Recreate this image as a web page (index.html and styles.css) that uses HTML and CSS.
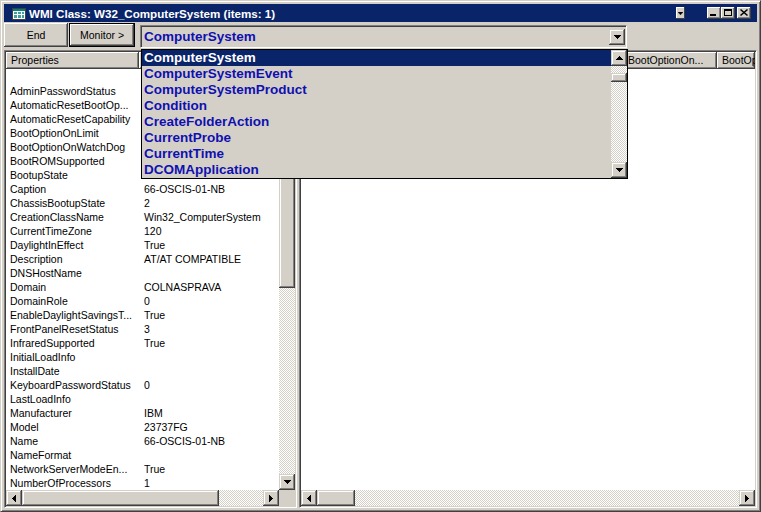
FILE: index.html
```html
<!DOCTYPE html>
<html lang="en">
<head>
  <meta charset="UTF-8">
  <title>WMI Class: W32_ComputerSystem</title>
  <link rel="stylesheet" href="styles.css">
</head>
<body>
  <svg width="0" height="0" class="defs">
    <symbol id="ar-down" viewBox="0 0 7 4"><path d="M0 0h7v1h-1v1h-1v1h-1v1h-1v-1h-1v-1h-1v-1h-1z"/></symbol>
    <symbol id="ar-up" viewBox="0 0 7 4"><path d="M0 4h7v-1h-1v-1h-1v-1h-1v-1h-1v1h-1v1h-1v1h-1z"/></symbol>
    <symbol id="ar-left" viewBox="0 0 4 7"><path d="M4 0v7h-1v-1h-1v-1h-1v-1h-1v-1h1v-1h1v-1h1v-1z"/></symbol>
    <symbol id="ar-right" viewBox="0 0 4 7"><path d="M0 0v7h1v-1h1v-1h1v-1h1v-1h-1v-1h-1v-1h-1v-1z"/></symbol>
  </svg>

  <div class="window">
    <div class="titlebar">
      <svg class="app-icon" width="14" height="12" viewBox="0 0 14 12">
        <rect x="0" y="0" width="14" height="12" fill="#404040"/>
        <rect x="1" y="1" width="12" height="10" fill="#ffffff"/>
        <rect x="1" y="1" width="12" height="2" fill="#008080"/>
        <rect x="2" y="4" width="3" height="2" fill="#40a0a0"/>
        <rect x="6" y="4" width="3" height="2" fill="#40a0a0"/>
        <rect x="10" y="4" width="2" height="2" fill="#40a0a0"/>
        <rect x="2" y="7" width="3" height="3" fill="#40a0a0"/>
        <rect x="6" y="7" width="3" height="3" fill="#40a0a0"/>
        <rect x="10" y="7" width="2" height="3" fill="#40a0a0"/>
      </svg>
      <span class="title">WMI Class: W32_ComputerSystem (items: 1)</span>
      <span class="cap-menu"><svg width="5" height="3"><use href="#ar-down"/></svg></span>
      <span class="cap-btn cap-min">
        <svg width="14" height="12"><rect x="3" y="7" width="6" height="2"/></svg>
      </span>
      <span class="cap-btn">
        <svg width="14" height="12"><path d="M3 2h8v7h-8z M4 4v4h6v-4z" fill-rule="evenodd"/></svg>
      </span>
      <span class="cap-btn cap-close">
        <svg width="14" height="12"><path d="M3.5 2.5l7 6M10.5 2.5l-7 6" stroke="#000" stroke-width="1.6"/></svg>
      </span>
    </div>

    <div class="toolbar">
      <button class="btn btn-end">End</button>
      <button class="btn btn-default">Monitor &gt;</button>
      <div class="combo">
        <span class="combo-text">ComputerSystem</span>
        <span class="sb-btn combo-btn"><svg width="7" height="4"><use href="#ar-down"/></svg></span>

        <div class="droplist">
          <div class="options">
            <div class="opt sel">ComputerSystem</div>
            <div class="opt">ComputerSystemEvent</div>
            <div class="opt">ComputerSystemProduct</div>
            <div class="opt">Condition</div>
            <div class="opt">CreateFolderAction</div>
            <div class="opt">CurrentProbe</div>
            <div class="opt">CurrentTime</div>
            <div class="opt">DCOMApplication</div>
          </div>
          <div class="vscroll drop-scroll">
            <span class="sb-btn"><svg width="7" height="4"><use href="#ar-up"/></svg></span>
            <span class="track track-top"></span>
            <span class="thumb thumb-small"></span>
            <span class="track"></span>
            <span class="sb-btn"><svg width="7" height="4"><use href="#ar-down"/></svg></span>
          </div>
        </div>
      </div>
    </div>

    <div class="panes">
      <div class="pane pane-left">
        <div class="pane-main">
          <div class="lv">
            <div class="lv-head">
              <span class="hcell hcell-name">Properties</span>
              <span class="hcell hcell-val"></span>
            </div>
            <div class="rows">
              <div class="row"><span class="name">AdminPasswordStatus</span><span class="val"></span></div>
              <div class="row"><span class="name">AutomaticResetBootOp...</span><span class="val"></span></div>
              <div class="row"><span class="name">AutomaticResetCapability</span><span class="val"></span></div>
              <div class="row"><span class="name">BootOptionOnLimit</span><span class="val"></span></div>
              <div class="row"><span class="name">BootOptionOnWatchDog</span><span class="val"></span></div>
              <div class="row"><span class="name">BootROMSupported</span><span class="val"></span></div>
              <div class="row"><span class="name">BootupState</span><span class="val"></span></div>
              <div class="row"><span class="name">Caption</span><span class="val">66-OSCIS-01-NB</span></div>
              <div class="row"><span class="name">ChassisBootupState</span><span class="val">2</span></div>
              <div class="row"><span class="name">CreationClassName</span><span class="val">Win32_ComputerSystem</span></div>
              <div class="row"><span class="name">CurrentTimeZone</span><span class="val">120</span></div>
              <div class="row"><span class="name">DaylightInEffect</span><span class="val">True</span></div>
              <div class="row"><span class="name">Description</span><span class="val">AT/AT COMPATIBLE</span></div>
              <div class="row"><span class="name">DNSHostName</span><span class="val"></span></div>
              <div class="row"><span class="name">Domain</span><span class="val">COLNASPRAVA</span></div>
              <div class="row"><span class="name">DomainRole</span><span class="val">0</span></div>
              <div class="row"><span class="name">EnableDaylightSavingsT...</span><span class="val">True</span></div>
              <div class="row"><span class="name">FrontPanelResetStatus</span><span class="val">3</span></div>
              <div class="row"><span class="name">InfraredSupported</span><span class="val">True</span></div>
              <div class="row"><span class="name">InitialLoadInfo</span><span class="val"></span></div>
              <div class="row"><span class="name">InstallDate</span><span class="val"></span></div>
              <div class="row"><span class="name">KeyboardPasswordStatus</span><span class="val">0</span></div>
              <div class="row"><span class="name">LastLoadInfo</span><span class="val"></span></div>
              <div class="row"><span class="name">Manufacturer</span><span class="val">IBM</span></div>
              <div class="row"><span class="name">Model</span><span class="val">23737FG</span></div>
              <div class="row"><span class="name">Name</span><span class="val">66-OSCIS-01-NB</span></div>
              <div class="row"><span class="name">NameFormat</span><span class="val"></span></div>
              <div class="row"><span class="name">NetworkServerModeEn...</span><span class="val">True</span></div>
              <div class="row"><span class="name">NumberOfProcessors</span><span class="val">1</span></div>
            </div>
          </div>
          <div class="vscroll">
            <span class="sb-btn"><svg width="7" height="4"><use href="#ar-up"/></svg></span>
            <span class="thumb thumb-left"></span>
            <span class="track"></span>
            <span class="sb-btn"><svg width="7" height="4"><use href="#ar-down"/></svg></span>
          </div>
        </div>
        <div class="hbar">
          <div class="hscroll">
            <span class="sb-btn"><svg width="4" height="7"><use href="#ar-left"/></svg></span>
            <span class="thumb thumb-h-left"></span>
            <span class="track"></span>
            <span class="sb-btn"><svg width="4" height="7"><use href="#ar-right"/></svg></span>
          </div>
          <span class="corner"></span>
        </div>
      </div>

      <div class="splitter"></div>

      <div class="pane pane-right">
        <div class="pane-main">
          <div class="lv">
            <div class="lv-head">
              <span class="hcell hcell-a"></span>
              <span class="hcell hcell-b">BootOptionOn...</span>
              <span class="hcell hcell-c">BootOp</span>
            </div>
          </div>
        </div>
        <div class="hbar">
          <div class="hscroll">
            <span class="sb-btn"><svg width="4" height="7"><use href="#ar-left"/></svg></span>
            <span class="thumb thumb-h-right"></span>
            <span class="track"></span>
            <span class="sb-btn"><svg width="4" height="7"><use href="#ar-right"/></svg></span>
          </div>
        </div>
      </div>
    </div>
  </div>
</body>
</html>
```

FILE: styles.css
```css
* {
  box-sizing: border-box;
}
body {
  margin: 0;
  font-family: "Liberation Sans", Arial, sans-serif;
  font-size: 10.5px;
  color: #000;
  background: #d4d0c8;
}
.defs {
  position: absolute;
}
svg {
  display: block;
}

/* window frame */
.window {
  width: 761px;
  height: 512px;
  display: flex;
  flex-direction: column;
  padding: 3px;
  background: #d4d0c8;
  border: 1px solid;
  border-color: #d4d0c8 #404040 #404040 #d4d0c8;
  box-shadow: inset 1px 1px #fff, inset -1px -1px #808080;
}

/* title bar */
.titlebar {
  height: 18px;
  flex: none;
  display: flex;
  align-items: center;
  padding: 0 6px 0 4px;
  background: #0a246a;
  color: #fff;
}
.app-icon {
  margin: 1px 3px 0 4px;
}
.title {
  flex: 1;
  font-weight: bold;
  font-size: 11.6px;
  white-space: nowrap;
}
.cap-menu {
  width: 9px;
  height: 12px;
  margin-right: 22px;
  display: flex;
  align-items: center;
  justify-content: center;
  background: #d4d0c8;
  box-shadow: inset -1px -1px #404040, inset 1px 1px #fff;
}
.cap-btn {
  width: 14px;
  height: 12px;
  background: #d4d0c8;
  box-shadow: inset -1px -1px #404040, inset 1px 1px #fff, inset -2px -2px #808080;
}
.cap-close {
  margin-left: 2px;
}

/* toolbar */
.toolbar {
  height: 25px;
  margin-top: 1px;
  flex: none;
  display: flex;
  align-items: flex-start;
}
.btn {
  height: 24px;
  margin: 0;
  padding: 0;
  border: none;
  font-family: inherit;
  font-size: 10.5px;
  background: #d4d0c8;
  box-shadow: inset -1px -1px #404040, inset 1px 1px #fff, inset -2px -2px #808080, inset 2px 2px #d4d0c8;
}
.btn-end {
  width: 64px;
}
.btn-default {
  width: 66px;
  margin-left: 1px;
  border: 1px solid #000;
  box-shadow: inset -1px -1px #404040, inset 1px 1px #fff, inset -2px -2px #808080;
}
.combo {
  position: relative;
  width: 487px;
  height: 23px;
  margin: 2px 0 0 5px;
  display: flex;
  align-items: center;
  border: 1px solid;
  border-color: #808080 #fff #fff #808080;
  box-shadow: inset 1px 1px #404040, inset -1px -1px #d4d0c8;
  padding: 1px;
}
.combo-text {
  flex: 1;
  padding-left: 2px;
  font-weight: bold;
  font-size: 13.5px;
  color: #1010b0;
}
.combo-btn {
  height: 19px;
}

/* dropdown list over the panes */
.droplist {
  position: absolute;
  left: 0;
  top: 23px;
  width: 487px;
  height: 130px;
  display: flex;
  border: 1px solid #000;
  background: #d4d0c8;
  z-index: 5;
}
.options {
  flex: 1;
}
.opt {
  height: 16px;
  line-height: 16px;
  padding-left: 2px;
  font-weight: bold;
  font-size: 13.5px;
  color: #1010b0;
  white-space: nowrap;
}
.opt.sel {
  background: #0a246a;
  color: #fff;
}
.drop-scroll .track-top {
  flex: none;
  height: 7px;
}
.thumb-small {
  height: 9px;
}

/* scrollbars */
.sb-btn {
  width: 16px;
  height: 16px;
  flex: none;
  display: flex;
  align-items: center;
  justify-content: center;
  background: #d4d0c8;
  box-shadow: inset -1px -1px #404040, inset 1px 1px #d4d0c8, inset -2px -2px #808080, inset 2px 2px #fff;
}
.thumb {
  flex: none;
  background: #d4d0c8;
  box-shadow: inset -1px -1px #404040, inset 1px 1px #d4d0c8, inset -2px -2px #808080, inset 2px 2px #fff;
}
.track {
  flex: 1;
  background-image: repeating-conic-gradient(#d4d0c8 0% 25%, #fff 0% 50%);
  background-size: 2px 2px;
}
.vscroll {
  width: 16px;
  flex: none;
  display: flex;
  flex-direction: column;
}
.hscroll {
  flex: 1;
  height: 16px;
  display: flex;
}
.thumb-left {
  height: 220px;
}
.thumb-h-left {
  width: 197px;
}
.thumb-h-right {
  width: 38px;
}
.corner {
  width: 16px;
  height: 16px;
  background: #d4d0c8;
}

/* panes */
.panes {
  flex: 1;
  margin-top: 2px;
  display: flex;
}
.pane {
  display: flex;
  flex-direction: column;
  padding: 1px;
  border: 1px solid;
  border-color: #808080 #fff #fff #808080;
  box-shadow: inset 1px 1px #404040, inset -1px -1px #d4d0c8;
}
.pane-left {
  width: 293px;
}
.pane-right {
  flex: 1;
  min-width: 0;
}
.splitter {
  width: 2px;
}
.pane-main {
  flex: 1;
  display: flex;
  min-height: 0;
}
.hbar {
  height: 16px;
  flex: none;
  display: flex;
}

/* list view */
.lv {
  flex: 1;
  min-width: 0;
  overflow: hidden;
  background: #fff;
}
.lv-head {
  height: 17px;
  display: flex;
  white-space: nowrap;
}
.hcell {
  flex: none;
  height: 17px;
  line-height: 16px;
  padding-left: 5px;
  overflow: hidden;
  background: #d4d0c8;
  box-shadow: inset -1px -1px #404040, inset 1px 1px #fff, inset -2px -2px #808080;
}
.hcell-name {
  width: 133px;
}
.hcell-val {
  width: 160px;
}
.hcell-a {
  width: 321px;
}
.hcell-b {
  width: 95px;
  padding-left: 6px;
}
.hcell-c {
  flex: 1;
  min-width: 0;
}
.rows {
  padding-top: 15px;
}
.row {
  height: 14px;
  line-height: 14px;
  display: flex;
  white-space: nowrap;
}
.name {
  width: 134px;
  flex: none;
  padding-left: 4px;
}
.val {
  padding-left: 4px;
}
```
